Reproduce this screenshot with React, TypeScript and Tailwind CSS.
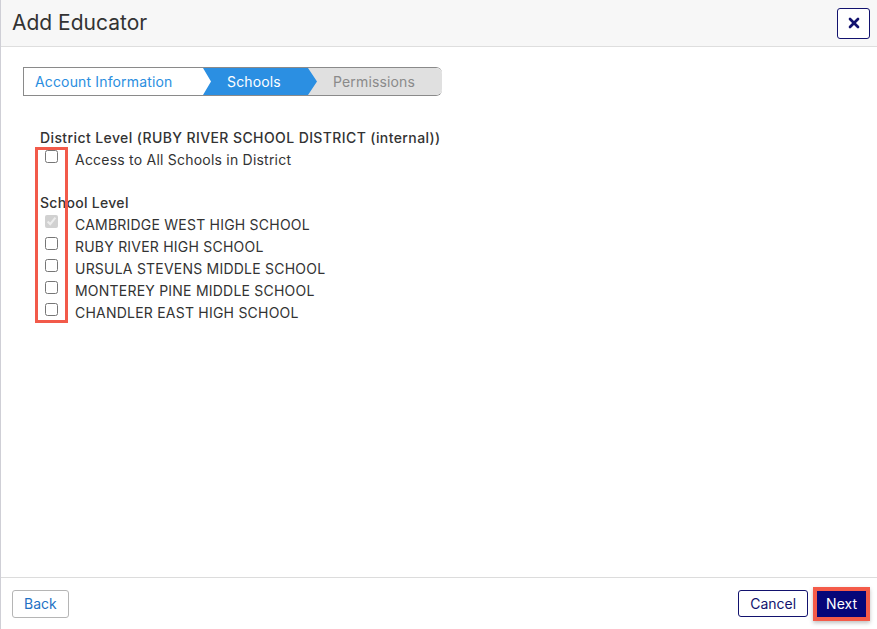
import { X } from "lucide-react";

const schools = [
  { name: "CAMBRIDGE WEST HIGH SCHOOL", locked: true },
  { name: "RUBY RIVER HIGH SCHOOL", locked: false },
  { name: "URSULA STEVENS MIDDLE SCHOOL", locked: false },
  { name: "MONTEREY PINE MIDDLE SCHOOL", locked: false },
  { name: "CHANDLER EAST HIGH SCHOOL", locked: false },
];

function CheckRow({ label, checked, disabled }: { label: string; checked?: boolean; disabled?: boolean }) {
  return (
    <label className="flex h-[22px] items-center">
      <input
        type="checkbox"
        defaultChecked={checked}
        disabled={disabled}
        className="m-0 ml-[5px] mb-[5px] h-[13px] w-[13px]"
      />
      <span className="ml-[17px] text-[14px] tracking-[0.22px] text-[#333]">{label}</span>
    </label>
  );
}

export default function App() {
  return (
    <div
      className="flex h-[629px] w-[877px] flex-col border-l border-[#cfcfd6] bg-white"
      style={{ fontFamily: "Inter, 'Liberation Sans', sans-serif" }}
    >
      {/* header */}
      <div className="flex h-[47px] shrink-0 items-center justify-between border-b border-[#dedede] bg-[#f7f7f7] pl-[11px] pr-[7px]">
        <h1 className="text-[21px] font-normal text-[#333]">Add Educator</h1>
        <button className="flex h-[31px] w-[33px] items-center justify-center rounded-[3px] border border-[#12126e] bg-white text-[#12126e]">
          <X size={16} strokeWidth={4} />
        </button>
      </div>

      {/* body */}
      <div className="relative flex-1 pl-[22px] pt-[20px]">
        {/* wizard */}
        <div className="flex h-[29px] w-[419px] rounded-r-[6px] border border-r-0 border-[#8a8a8a] text-[14px] tracking-[0.15px]">
          <div className="flex w-[180px] items-center bg-white pl-[11px] text-[#2a8ee0]">Account Information</div>
          <div className="-ml-[1px] flex w-[114px] items-center bg-[#2b8fe2] pl-[24px] text-white [clip-path:polygon(0_0,calc(100%-9px)_0,100%_50%,calc(100%-9px)_100%,0_100%,8px_50%)]">
            Schools
          </div>
          <div className="-ml-[9px] flex flex-1 items-center rounded-r-[6px] bg-[#e0e0e0] pl-[25px] text-[#8a8a8a]">
            Permissions
          </div>
        </div>

        <div className="ml-[17px] mt-[30px]">
          <div className="flex h-[22px] items-center text-[14px] font-medium tracking-[0.4px] text-[#333]">
            District Level (RUBY RIVER SCHOOL DISTRICT (internal))
          </div>
          <CheckRow label="Access to All Schools in District" />

          <div className="mt-[21px] flex h-[22px] items-center text-[14px] font-medium tracking-[0.3px] text-[#333]">
            School Level
          </div>
          {schools.map((s) => (
            <CheckRow key={s.name} label={s.name} checked={s.locked} disabled={s.locked} />
          ))}
        </div>

        {/* highlight annotation */}
        <div className="pointer-events-none absolute left-[34px] top-[100px] h-[176px] w-[33px] border-[3px] border-[#f25a4a]" />
      </div>

      {/* footer */}
      <div className="flex h-[52px] shrink-0 items-center justify-between border-t border-[#dcdcdc] pl-[11px] pr-[7px]">
        <button className="h-[28px] rounded-[3px] border border-[#b5b5b5] bg-white px-[11px] text-[14px] text-[#1f72c4]">
          Back
        </button>
        <div className="flex items-center gap-[5px]">
          <button className="h-[27px] rounded-[3px] border border-[#12126e] bg-white px-[11px] text-[14px] text-[#12126e]">
            Cancel
          </button>
          <div className="border-4 border-[#f45b49] shadow-[0_2px_4px_rgba(0,0,0,0.25)]">
            <button className="block h-[26px] bg-[#060679] px-[9px] text-[14px] text-white">Next</button>
          </div>
        </div>
      </div>
    </div>
  );
}
